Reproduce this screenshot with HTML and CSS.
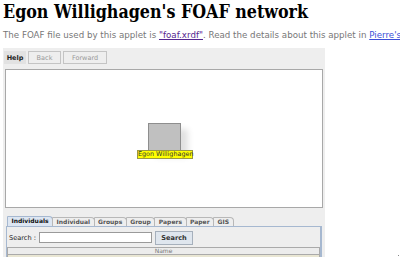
FILE: index.html
```html
<!DOCTYPE html>
<html lang="en">
<head>
  <meta charset="UTF-8">
  <title>Egon Willighagen's FOAF network</title>
  <link rel="stylesheet" href="styles.css">
</head>
<body>
  <h1>Egon Willighagen's FOAF network</h1>
  <p class="intro">The FOAF file used by this applet is <a class="visited" href="#">"foaf.xrdf"</a>. Read the details about this applet in <a href="#">Pierre's</a></p>

  <!-- the applet area -->
  <div class="applet">
    <div class="toolbar">
      <button class="tool active">Help</button>
      <button class="tool">Back</button>
      <button class="tool">Forward</button>
    </div>

    <div class="canvas">
      <div class="node">
        <div class="node-box"></div>
        <span class="node-label">Egon Willighagen</span>
      </div>
    </div>

    <div class="tabs">
      <span class="tab selected">Individuals</span>
      <span class="tab">Individual</span>
      <span class="tab">Groups</span>
      <span class="tab">Group</span>
      <span class="tab">Papers</span>
      <span class="tab">Paper</span>
      <span class="tab">GIS</span>
    </div>

    <div class="tab-panel">
      <div class="search-row">
        <label for="search">Search :</label>
        <input type="text" id="search">
        <button class="search-btn">Search</button>
      </div>
      <div class="table">
        <div class="table-head">Name</div>
        <div class="table-row"></div>
      </div>
    </div>
  </div>

  <span class="dot"></span>
</body>
</html>
```

FILE: styles.css
```css
body {
  margin: 0;
  padding: 3px;
  background-color: #fff;
  overflow: hidden;
  position: relative;
  height: 251px;
}
h1 {
  font-family: "DejaVu Serif", serif;
  font-stretch: condensed;
  font-weight: bold;
  font-size: 17.7px;
  line-height: 18px;
  margin: 0;
  color: #000;
  white-space: nowrap;
}
.intro {
  font-family: "DejaVu Sans", sans-serif;
  font-size: 8.7px;
  color: #777;
  margin: 9px 0 0 0;
  white-space: nowrap;
  line-height: 11px;
}
.intro a {
  color: #3b4fd8;
}
.intro a.visited {
  color: #55268f;
}
.applet {
  margin-top: 7px;
  width: 322px;
  height: 210px;
  background-color: #eeeeee;
  font-family: "DejaVu Sans", sans-serif;
  font-size: 7px;
  color: #222;
  padding-top: 3px;
  box-sizing: border-box;
}
.toolbar {
  display: flex;
  gap: 2px;
  padding-left: 1px;
  height: 13px;
}
.tool {
  font-family: "DejaVu Sans", sans-serif;
  font-size: 6.5px;
  color: #999;
  background-color: #eeeeee;
  border: 1px solid #c4c4c4;
  padding: 0;
  width: 33px;
  height: 13px;
  cursor: pointer;
}
.tool:last-child {
  width: 44px;
}
.tool.active {
  width: 22px;
  color: #222;
  font-weight: bold;
  background-color: #e2e2e2;
  border-color: #e2e2e2;
}
.canvas {
  margin: 5px 0 0 2px;
  width: 318px;
  height: 139px;
  background-color: #fff;
  border: 1px solid #a8a8a8;
  box-sizing: border-box;
  position: relative;
}
.node {
  position: absolute;
  left: 131px;
  top: 53px;
  width: 56px;
}
.node-box {
  margin-left: 11px;
  width: 33px;
  height: 28px;
  background-color: #c0c0c0;
  border: 1px solid #8e8e8e;
  box-sizing: border-box;
  box-shadow: 7px 6px 6px rgba(0, 0, 0, 0.12);
}
.node-label {
  display: block;
  margin-top: -1px;
  background-color: #ffff00;
  border: 1px solid #9a9a40;
  font-size: 6.4px;
  line-height: 7px;
  text-align: center;
  color: #333;
  white-space: nowrap;
}
.tabs {
  display: flex;
  margin: 9px 0 0 4px;
  height: 9px;
  align-items: flex-end;
}
.tab {
  font-size: 6px;
  font-weight: bold;
  height: 8px;
  line-height: 8px;
  padding: 0 3.5px;
  border: 1px solid #b8b8b8;
  border-bottom: none;
  margin-right: -1px;
  background-color: #eeeeee;
  border-radius: 1px 4px 0 0;
  color: #555;
}
.tab.selected {
  background-color: #dde6f2;
  border-color: #a6b8d0;
  color: #111;
  height: 9px;
}
.tab-panel {
  margin-left: 3px;
  width: 316px;
  height: 32px;
  border: 1px solid #a6b8d0;
  border-right-width: 2px;
  border-bottom: none;
  box-sizing: border-box;
}
.search-row {
  display: flex;
  align-items: center;
  gap: 3px;
  padding: 3px 0 0 2px;
  height: 15px;
}
.search-row label {
  font-size: 6.6px;
  white-space: nowrap;
}
.search-row input {
  width: 113px;
  height: 11px;
  box-sizing: border-box;
  border: 1px solid #9a9a9a;
  padding: 0;
  margin: 0;
}
.search-btn {
  font-family: "DejaVu Sans", sans-serif;
  font-size: 6.6px;
  font-weight: bold;
  color: #333;
  width: 38px;
  height: 14px;
  padding: 0;
  border: 1px solid #a6b0bc;
  background-color: #dfe6ee;
  cursor: pointer;
}
.table {
  margin-top: 2px;
  width: 313px;
  border: 1px solid #aaa;
  border-bottom: none;
  box-sizing: border-box;
}
.table-head {
  height: 6px;
  line-height: 6px;
  font-size: 6px;
  text-align: center;
  color: #777;
  background-color: #ececec;
  border-bottom: 1px solid #aaa;
}
.table-row {
  height: 4px;
  background-color: #e9e6d3;
}
.dot {
  position: absolute;
  right: 1px;
  bottom: 1px;
  width: 1px;
  height: 1px;
  background-color: #888;
}
```
